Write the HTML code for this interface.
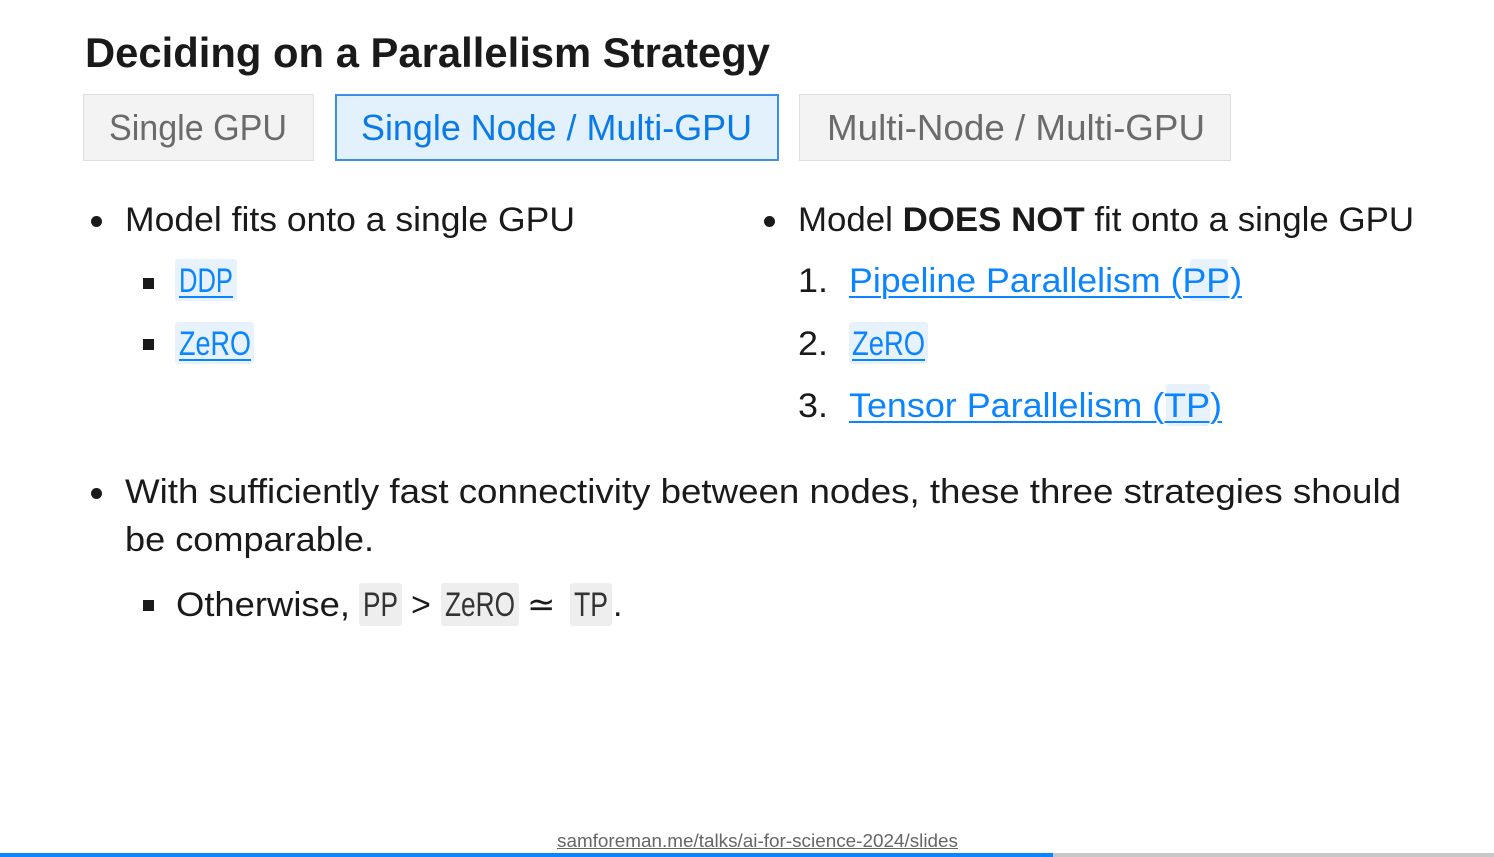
<!DOCTYPE html>
<html><head><meta charset="utf-8">
<style>
html,body{margin:0;padding:0;background:#fff;width:1494px;height:857px;overflow:hidden;position:relative;font-family:"Liberation Sans",sans-serif;color:#1a1a1a}
.a{position:absolute;white-space:nowrap;transform-origin:0 50%;line-height:44px;height:44px}
.box{position:absolute;box-sizing:border-box}
.lk{color:#0a84ff;text-decoration:underline;text-decoration-thickness:2px;text-underline-offset:4px}
.cb{position:absolute;background:#e7f2fd;border-radius:3px}
.gb{position:absolute;background:#eeeeee;border-radius:3px}
.dot{position:absolute;width:11px;height:11px;border-radius:50%;background:#1a1a1a}
.sq{position:absolute;width:11px;height:11px;background:#1a1a1a}
</style></head><body>
<div class="a fit" style="left:85px;top:30px;font-size:42px;font-weight:bold;--w:685px;height:46px;line-height:46px">Deciding on a Parallelism Strategy</div>

<div class="box" style="left:83px;top:94px;width:231px;height:67px;background:#f3f3f3;border:1px solid #dedede"></div>
<div class="box" style="left:335px;top:94px;width:444px;height:67px;background:#e3f1fd;border:2px solid #3d8fe6"></div>
<div class="box" style="left:799px;top:94px;width:432px;height:67px;background:#f3f3f3;border:1px solid #dedede"></div>
<div class="a fit" style="left:109px;top:106px;font-size:36px;color:#6b6b6b;--w:178px">Single GPU</div>
<div class="a fit" style="left:361px;top:106px;font-size:36px;color:#0a7ae8;--w:391px">Single Node / Multi-GPU</div>
<div class="a fit" style="left:827px;top:106px;font-size:36px;color:#6b6b6b;--w:378px">Multi-Node / Multi-GPU</div>

<div class="dot" style="left:91px;top:216px"></div>
<div class="a fit" style="left:125px;top:198px;font-size:34px;--w:450px">Model fits onto a single GPU</div>
<div class="sq" style="left:143px;top:278px"></div>
<div class="cb" style="left:175px;top:259px;width:62px;height:42px"></div>
<div class="a fit lk" style="left:179px;top:259px;font-size:34px;--w:54px">DDP</div>
<div class="sq" style="left:143px;top:339px"></div>
<div class="cb" style="left:175px;top:322px;width:79px;height:42px"></div>
<div class="a fit lk" style="left:179px;top:322px;font-size:34px;--w:72px">ZeRO</div>

<div class="dot" style="left:764px;top:216px"></div>
<div class="a fit" style="left:798px;top:198px;font-size:34px;--w:616px">Model <b>DOES NOT</b> fit onto a single GPU</div>
<div class="a fit" style="left:798px;top:259px;font-size:34px;--w:30px">1.</div>
<div class="cb" style="left:1190px;top:259px;width:38px;height:42px"></div>
<div class="a fit lk" style="left:849px;top:259px;font-size:34px;--w:393px">Pipeline Parallelism (PP)</div>
<div class="a fit" style="left:798px;top:322px;font-size:34px;--w:30px">2.</div>
<div class="cb" style="left:849px;top:322px;width:79px;height:42px"></div>
<div class="a fit lk" style="left:852px;top:322px;font-size:34px;--w:73px">ZeRO</div>
<div class="a fit" style="left:798px;top:384px;font-size:34px;--w:30px">3.</div>
<div class="cb" style="left:1166px;top:384px;width:44px;height:42px"></div>
<div class="a fit lk" style="left:849px;top:384px;font-size:34px;--w:373px">Tensor Parallelism (TP)</div>

<div class="dot" style="left:91px;top:488px"></div>
<div class="a fit" style="left:125px;top:470px;font-size:34px;--w:1276px">With sufficiently fast connectivity between nodes, these three strategies should</div>
<div class="a fit" style="left:125px;top:518px;font-size:34px;--w:249px">be comparable.</div>
<div class="sq" style="left:143px;top:600px"></div>
<div class="a fit" style="left:176px;top:583px;font-size:34px;--w:174px">Otherwise,</div>
<div class="gb" style="left:359px;top:583px;width:43px;height:43px"></div>
<div class="a fit" style="left:363px;top:583px;font-size:34px;color:#333;--w:35px">PP</div>
<div class="a" style="left:411px;top:583px;font-size:34px">&gt;</div>
<div class="gb" style="left:441px;top:583px;width:78px;height:43px"></div>
<div class="a fit" style="left:445px;top:583px;font-size:34px;color:#333;--w:70px">ZeRO</div>
<div class="a" style="left:527px;top:583px;font-size:34px">≃</div>
<div class="gb" style="left:570px;top:583px;width:42px;height:43px"></div>
<div class="a fit" style="left:574px;top:583px;font-size:34px;color:#333;--w:34px">TP</div>
<div class="a" style="left:613px;top:583px;font-size:34px">.</div>

<div class="a fit" style="left:557px;top:829px;font-size:18px;line-height:24px;height:24px;color:#666;text-decoration:underline;--w:401px">samforeman.me/talks/ai-for-science-2024/slides</div>
<div class="box" style="left:0;top:853px;width:1053px;height:4px;background:#0a84ff"></div>
<div class="box" style="left:1053px;top:853px;width:441px;height:4px;background:#c8c8c8"></div>
<script>
document.querySelectorAll('.fit').forEach(function(e){
  var w=parseFloat(getComputedStyle(e).getPropertyValue('--w'));
  var r=e.getBoundingClientRect().width;
  if(w&&r) e.style.transform='scaleX('+(w/r)+')';
});
</script>
</body></html>
